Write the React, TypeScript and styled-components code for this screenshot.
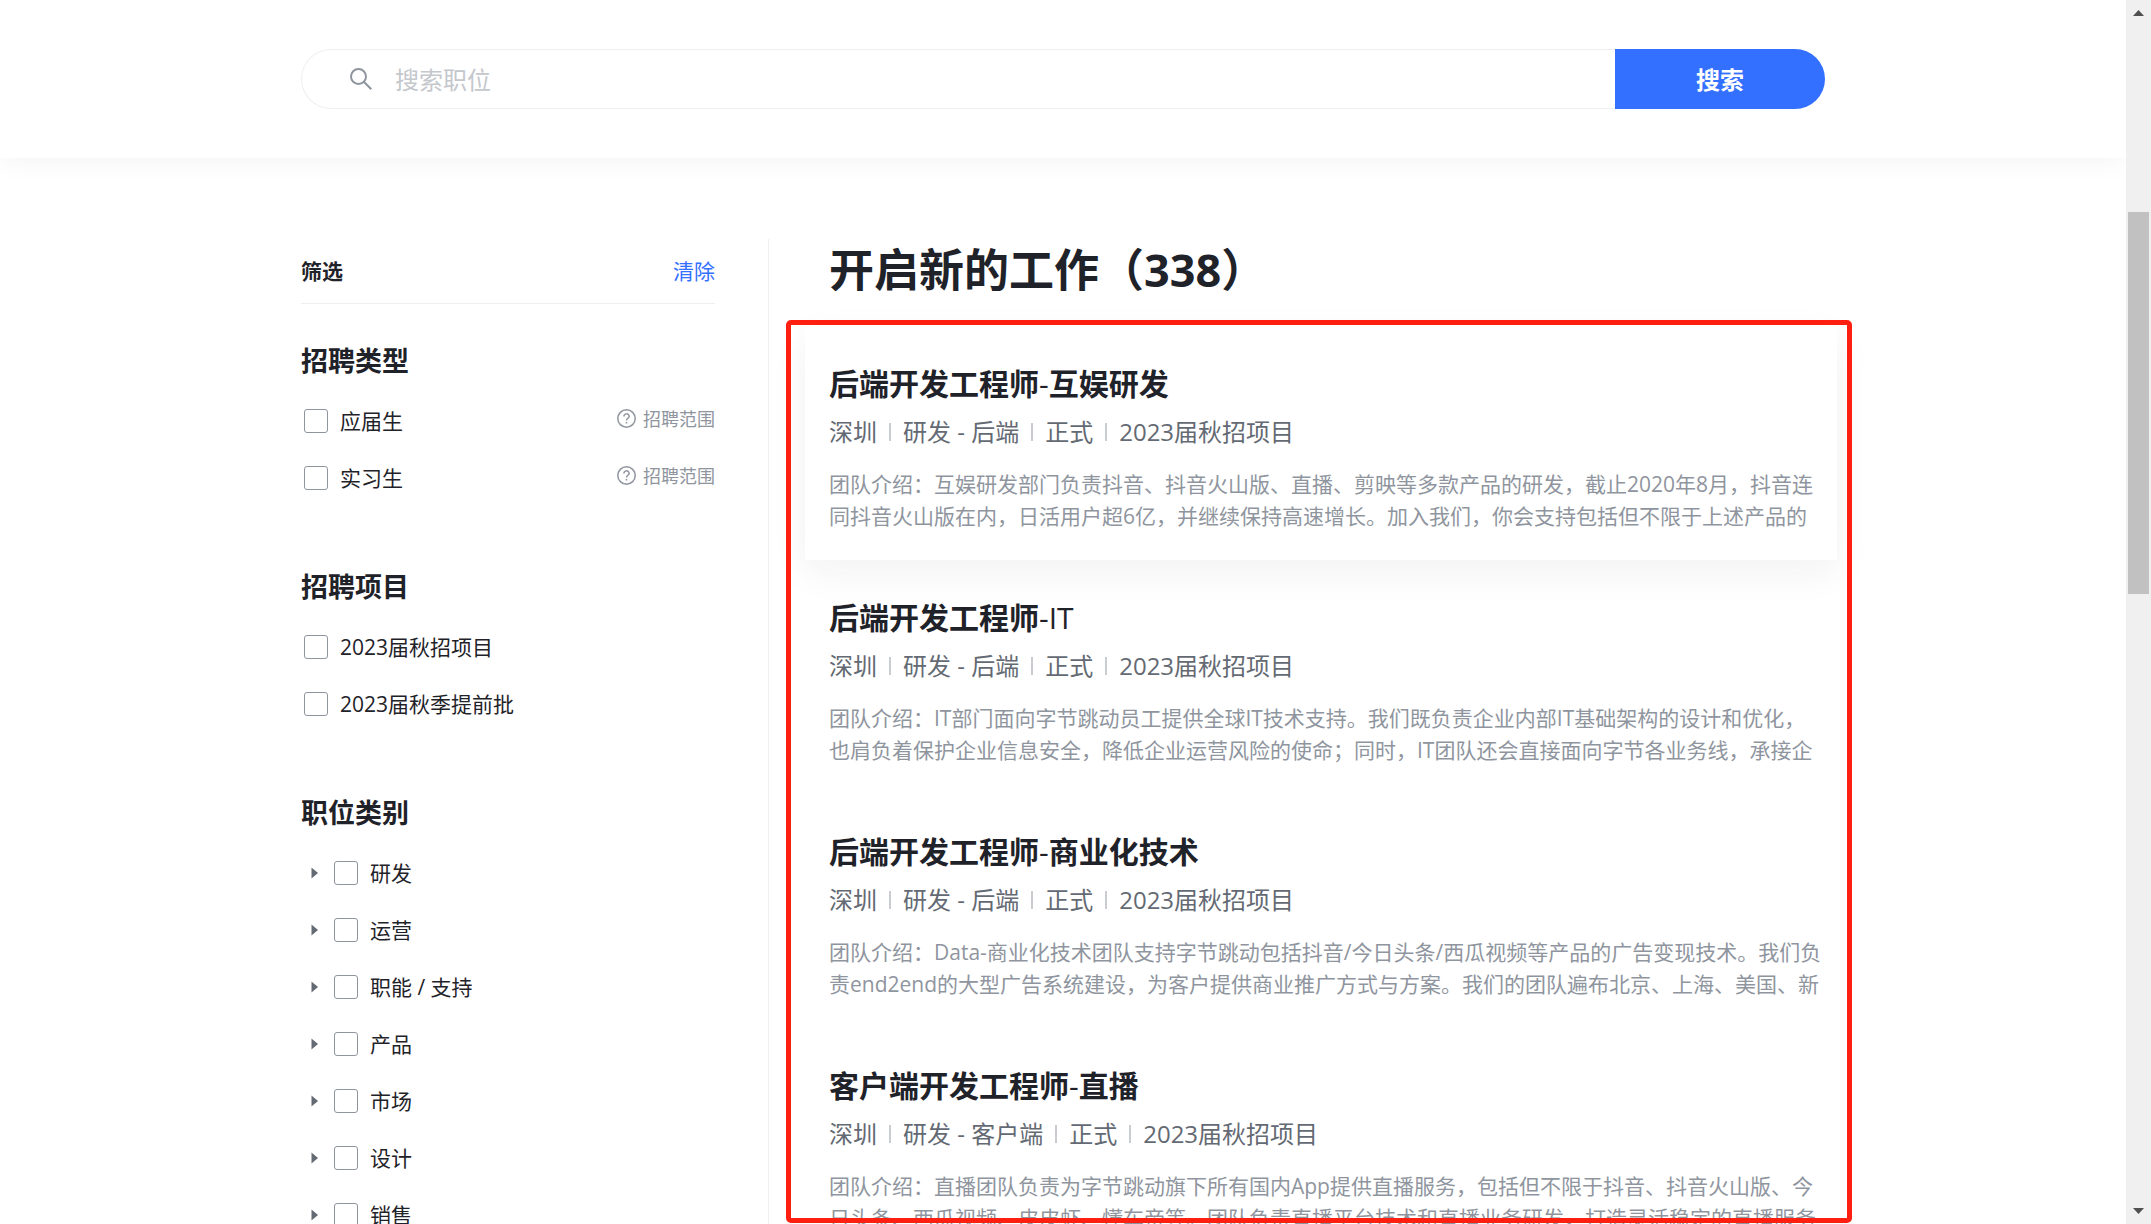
import React from "react";
import styled, { createGlobalStyle } from "styled-components";

const ink = "#1f2329";
const slate = "#646a73";
const muted = "#8f959e";
const hairline = "#eeeff0";
const brand = "#3370ff";

const GlobalStyle = createGlobalStyle`
  *, *::before, *::after { box-sizing: border-box; }
  body {
    margin: 0;
    background: #fff;
    color: ${ink};
    font-family: "Open Sans", "Noto Sans CJK SC", sans-serif;
    font-size: 21px;
  }
  h1, h2, h3, p, ul { margin: 0; padding: 0; }
  ul { list-style: none; }
  button, input { font: inherit; }
`;

const Shell = styled.div`
  display: flex;
  height: 100vh;
  overflow: hidden;
`;

const Page = styled.div`
  flex: 1;
  min-width: 0;
  display: flex;
  flex-direction: column;
  overflow: hidden;
`;

const Container = styled.div`
  width: 100%;
  max-width: 1524px;
  margin: 0 auto;
`;

const SearchHeader = styled.header`
  padding: 49px 0;
  background: #fff;
  box-shadow: 0 6px 24px rgba(31, 35, 41, 0.04);
`;

const SearchForm = styled.form`
  display: flex;
  height: 60px;
`;

const SearchField = styled.label`
  flex: 1;
  display: flex;
  align-items: center;
  gap: 23px;
  padding-left: 46px;
  border: 1px solid ${hairline};
  border-right: 0;
  border-radius: 30px 0 0 30px;
`;

const SearchInput = styled.input`
  flex: 1;
  min-width: 0;
  padding: 2px 0 0;
  border: 0;
  outline: 0;
  background: transparent;
  color: ${ink};
  font-size: 24px;
  line-height: 36px;
  &::placeholder { color: #c4c7cc; opacity: 1; }
`;

const SearchButton = styled.button`
  width: 210px;
  border: 0;
  padding: 0 0 2px;
  border-radius: 0 30px 30px 0;
  background: ${brand};
  color: #fff;
  font-size: 24px;
  font-weight: 700;
  cursor: pointer;
`;

const Body = styled(Container)`
  flex: 1;
  min-height: 0;
  display: flex;
  padding-top: 81px;
`;

const Sidebar = styled.aside`
  flex: none;
  width: 468px;
  padding-right: 53px;
  border-right: 1px solid ${hairline};
`;

const FilterHeader = styled.div`
  display: flex;
  align-items: center;
  justify-content: space-between;
  height: 65px;
  margin-bottom: 37px;
  padding-bottom: 3px;
  border-bottom: 1px solid ${hairline};
  font-weight: 700;
`;

const ClearButton = styled.button`
  padding: 0;
  border: 0;
  background: none;
  color: ${brand};
  font-weight: 400;
  cursor: pointer;
`;

const FilterGroup = styled.section`
  margin-bottom: 61px;
`;

const GroupTitle = styled.h2`
  margin-bottom: 11px;
  font-size: 27px;
  line-height: 40px;
  font-weight: 700;
`;

const OptionRow = styled.li<{ $nested?: boolean }>`
  display: flex;
  align-items: center;
  height: 57px;
  padding-left: ${(p) => (p.$nested ? 10 : 3)}px;
`;

const ExpandButton = styled.button`
  display: flex;
  width: 23px;
  padding: 0;
  border: 0;
  background: none;
  cursor: pointer;
`;

const OptionLabel = styled.label`
  display: flex;
  align-items: center;
  gap: 12px;
  line-height: 32px;
  cursor: pointer;
`;

const Checkbox = styled.input`
  appearance: none;
  width: 24px;
  height: 24px;
  margin: 0;
  border: 1px solid ${muted};
  border-radius: 3px;
  background: #fff;
  &:checked { background: ${brand}; border-color: ${brand}; }
`;

const ScopeHint = styled.button`
  display: flex;
  align-items: center;
  gap: 7px;
  margin-left: auto;
  padding: 0 0 4px;
  border: 0;
  background: none;
  color: ${muted};
  font-size: 18px;
  line-height: 24px;
  cursor: pointer;
`;

const Results = styled.main`
  flex: 1;
  min-width: 0;
  display: flex;
  flex-direction: column;
  padding-left: 60px;
`;

const ResultsTitle = styled.h1`
  flex: none;
  margin-bottom: 25px;
  font-size: 45px;
  line-height: 62px;
  font-weight: 700;
`;

const JobArea = styled.div`
  position: relative;
  flex: 1;
  min-height: 0;
`;

const Marker = styled.div`
  position: absolute;
  inset: -6px -27px 1px -43px;
  border: 5px solid #ff1f10;
  border-radius: 5px;
  pointer-events: none;
`;

const JobCard = styled.li<{ $raised?: boolean }>`
  margin: 0 -12px 0 -24px;
  padding: 36px 12px 28px 24px;
  box-shadow: ${(p) => (p.$raised ? "0 12px 36px rgba(31, 35, 41, 0.06)" : "none")};
`;

const JobTitle = styled.h3`
  margin-bottom: 8px;
  font-size: 30px;
  line-height: 44px;
  font-weight: 700;
`;

const Latin = styled.span`
  font-weight: 500;
`;

const JobMeta = styled.ul`
  display: flex;
  margin-bottom: 18px;
  color: ${slate};
  font-size: 24px;
  line-height: 36px;
`;

const MetaItem = styled.li`
  display: flex;
  align-items: center;
  white-space: pre;
  & + &::before {
    content: "";
    width: 2px;
    height: 18px;
    margin: 0 12px;
    background: #c9ccd1;
  }
`;

const JobText = styled.p`
  height: 64px;
  overflow: hidden;
  color: ${muted};
  line-height: 32px;
`;

const Scrollbar = styled.div`
  flex: none;
  display: flex;
  flex-direction: column;
  align-items: center;
  justify-content: space-between;
  width: 25px;
  padding: 10px 0;
  background: #f0f0f0;
`;

const ScrollTrack = styled.div`
  flex: 1;
  width: 21px;
  padding-top: 196px;
`;

const ScrollThumb = styled.div`
  height: 382px;
  background: #c1c1c1;
`;

const SearchIcon = () => (
  <svg width="24" height="24" viewBox="0 0 24 24" fill="none" stroke={muted} strokeWidth="2" aria-hidden="true">
    <circle cx="10.5" cy="9.5" r="7.5" />
    <path d="M15.8 14.8 L23.3 22.3" />
  </svg>
);

const QuestionIcon = () => (
  <svg width="19" height="19" viewBox="0 0 19 19" fill="none" stroke={muted} strokeWidth="1.5" aria-hidden="true">
    <circle cx="9.5" cy="9.5" r="8.7" />
    <path d="M6.9 7.6 C6.9 4 12.1 4 12.1 7.4 C12.1 9.3 9.5 9.2 9.5 11.5" />
    <path d="M9.5 12.9 V14.5" />
  </svg>
);

const Caret = () => (
  <svg width="7" height="12" viewBox="0 0 7 12" fill={slate} aria-hidden="true">
    <path d="M0.5 0.5 L7 6 L0.5 11.5 Z" />
  </svg>
);

const ScrollArrow = ({ up }: { up?: boolean }) => (
  <svg width="11" height="6" viewBox="0 0 11 6" fill="#505050" aria-hidden="true">
    <path d={up ? "M0 6 L5.5 0 L11 6 Z" : "M0 0 L5.5 6 L11 0 Z"} />
  </svg>
);

const groups = [
  { title: "招聘类型", options: ["应届生", "实习生"], hint: "招聘范围" },
  { title: "招聘项目", options: ["2023届秋招项目", "2023届秋季提前批"] },
  {
    title: "职位类别",
    options: ["研发", "运营", "职能 / 支持", "产品", "市场", "设计", "销售"],
    nested: true,
  },
];

const jobs = [
  {
    title: "后端开发工程师-互娱研发",
    meta: ["深圳", "研发 - 后端", "正式", "2023届秋招项目"],
    text: "团队介绍：互娱研发部门负责抖音、抖音火山版、直播、剪映等多款产品的研发，截止2020年8月，抖音连同抖音火山版在内，日活用户超6亿，并继续保持高速增长。加入我们，你会支持包括但不限于上述产品的",
  },
  {
    title: "后端开发工程师-IT",
    meta: ["深圳", "研发 - 后端", "正式", "2023届秋招项目"],
    text: "团队介绍：IT部门面向字节跳动员工提供全球IT技术支持。我们既负责企业内部IT基础架构的设计和优化，也肩负着保护企业信息安全，降低企业运营风险的使命；同时，IT团队还会直接面向字节各业务线，承接企",
  },
  {
    title: "后端开发工程师-商业化技术",
    meta: ["深圳", "研发 - 后端", "正式", "2023届秋招项目"],
    text: "团队介绍：Data-商业化技术团队支持字节跳动包括抖音/今日头条/西瓜视频等产品的广告变现技术。我们负责end2end的大型广告系统建设，为客户提供商业推广方式与方案。我们的团队遍布北京、上海、美国、新",
  },
  {
    title: "客户端开发工程师-直播",
    meta: ["深圳", "研发 - 客户端", "正式", "2023届秋招项目"],
    text: "团队介绍：直播团队负责为字节跳动旗下所有国内App提供直播服务，包括但不限于抖音、抖音火山版、今日头条、西瓜视频、皮皮虾、懂车帝等。团队负责直播平台技术和直播业务研发，打造灵活稳定的直播服务",
  },
];

const splitLatin = (title: string) =>
  title.split(/([-A-Za-z]+)/).map((part, i) => (i % 2 ? <Latin key={i}>{part}</Latin> : part));

export default function App() {
  return (
    <>
      <GlobalStyle />
      <Shell>
        <Page>
          <SearchHeader>
            <Container>
              <SearchForm onSubmit={(e) => e.preventDefault()}>
                <SearchField>
                  <SearchIcon />
                  <SearchInput type="text" placeholder="搜索职位" />
                </SearchField>
                <SearchButton type="submit">搜索</SearchButton>
              </SearchForm>
            </Container>
          </SearchHeader>
          <Body>
            <Sidebar>
              <FilterHeader>
                筛选
                <ClearButton type="button">清除</ClearButton>
              </FilterHeader>
              {groups.map((group) => (
                <FilterGroup key={group.title}>
                  <GroupTitle>{group.title}</GroupTitle>
                  <ul>
                    {group.options.map((option) => (
                      <OptionRow key={option} $nested={group.nested}>
                        {group.nested && (
                          <ExpandButton type="button">
                            <Caret />
                          </ExpandButton>
                        )}
                        <OptionLabel>
                          <Checkbox type="checkbox" />
                          {option}
                        </OptionLabel>
                        {group.hint && (
                          <ScopeHint type="button">
                            <QuestionIcon />
                            {group.hint}
                          </ScopeHint>
                        )}
                      </OptionRow>
                    ))}
                  </ul>
                </FilterGroup>
              ))}
            </Sidebar>
            <Results>
              <ResultsTitle>开启新的工作（338）</ResultsTitle>
              <JobArea>
                <ul>
                  {jobs.map((job, i) => (
                    <JobCard key={job.title} $raised={i === 0}>
                      <JobTitle>{splitLatin(job.title)}</JobTitle>
                      <JobMeta>
                        {job.meta.map((item) => (
                          <MetaItem key={item}>{item}</MetaItem>
                        ))}
                      </JobMeta>
                      <JobText>{job.text}</JobText>
                    </JobCard>
                  ))}
                </ul>
                <Marker />
              </JobArea>
            </Results>
          </Body>
        </Page>
        <Scrollbar>
          <ScrollArrow up />
          <ScrollTrack>
            <ScrollThumb />
          </ScrollTrack>
          <ScrollArrow />
        </Scrollbar>
      </Shell>
    </>
  );
}
